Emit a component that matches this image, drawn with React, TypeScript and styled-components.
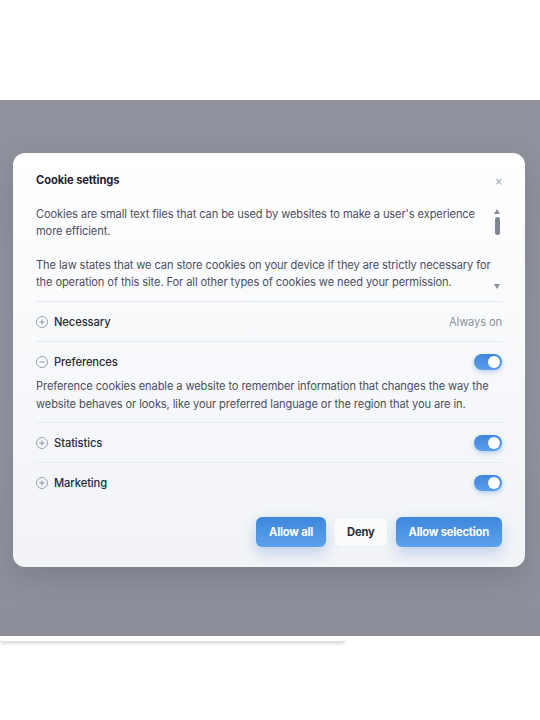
import React from "react";
import styled, { createGlobalStyle } from "styled-components";

const Global = createGlobalStyle`
  html, body { margin: 0; padding: 0; background: #ffffff; }
  body { font-family: Inter, "Noto Sans", sans-serif; -webkit-font-smoothing: antialiased; }
  * { box-sizing: border-box; }
`;

const Page = styled.div`
  width: 540px;
  height: 720px;
  padding-top: 100px;
  background: #ffffff;
`;

const Backdrop = styled.div`
  height: 536px;
  background: linear-gradient(180deg, #8f929c 0%, #9396a0 60%, #8c8f99 100%);
  padding: 53px 15px 0 13px;
`;

const Modal = styled.div`
  width: 512px;
  border-radius: 12px;
  background: linear-gradient(180deg, #ffffff 0%, #f9fafc 40%, #f1f3f6 100%);
  padding: 0 23px 20px;
  box-shadow: 0 10px 30px rgba(40, 44, 60, 0.18);
`;

const Header = styled.div`
  height: 53px;
  display: flex;
  align-items: center;
  justify-content: space-between;
`;

const Title = styled.h2`
  margin: 0;
  font-size: 11.2px;
  font-weight: 700;
  color: #1f2330;
  letter-spacing: -0.1px;
`;

const Close = styled.button`
  border: 0;
  background: transparent;
  padding: 0;
  margin-right: -1px;
  margin-top: 4px;
  font-size: 10px;
  line-height: 10px;
  color: #9aa1b0;
  font-family: "DejaVu Sans", sans-serif;
`;

const Intro = styled.div`
  display: flex;
  height: 96px;
  padding-bottom: 8px;
  border-bottom: 1px solid #e7eaef;
`;

const IntroText = styled.div`
  flex: 1;
  overflow: hidden;
  font-size: 11.1px;
  line-height: 17px;
  color: #4a4f5e;
  letter-spacing: -0.1px;
  p { margin: 0 0 17px; }
`;

const ScrollBar = styled.div`
  width: 10px;
  display: flex;
  flex-direction: column;
  align-items: center;
  padding-top: 3px;
`;

const Arrow = styled.div<{ $down?: boolean }>`
  width: 0;
  height: 0;
  border-left: 3.5px solid transparent;
  border-right: 3.5px solid transparent;
  ${(p) =>
    p.$down
      ? "border-top: 5px solid #8a909c; margin-top: auto; margin-bottom: 4px;"
      : "border-bottom: 5px solid #8a909c;"}
`;

const Thumb = styled.div`
  width: 5px;
  height: 18px;
  border-radius: 3px;
  background: #7f8591;
  margin-top: 3px;
`;

const Row = styled.div<{ $last?: boolean }>`
  border-bottom: ${(p) => (p.$last ? "0" : "1px solid #e7eaef")};
`;

const RowHead = styled.div<{ $open?: boolean }>`
  height: ${(p) => (p.$open ? "35px" : "39px")};
  padding-top: ${(p) => (p.$open ? "5px" : "0")};
  display: flex;
  align-items: center;
  gap: 6px;
`;

const PlusIcon = styled.span`
  width: 12px;
  height: 12px;
  border-radius: 50%;
  border: 1px solid #9aa2b3;
  display: inline-flex;
  align-items: center;
  justify-content: center;
  svg { display: block; }
`;

const Label = styled.span`
  font-size: 11.2px;
  font-weight: 500;
  color: #272b37;
  flex: 1;
  letter-spacing: -0.1px;
`;

const Always = styled.span`
  font-size: 11.1px;
  color: #8b91a0;
  letter-spacing: -0.1px;
`;

const Toggle = styled.span`
  width: 28px;
  height: 16px;
  border-radius: 8px;
  background: linear-gradient(180deg, #3f86dc 0%, #5a9eea 100%);
  box-shadow: 0 2px 5px rgba(64, 130, 220, 0.35);
  display: inline-flex;
  align-items: center;
  justify-content: flex-end;
  padding: 0 2px;
  &::after {
    content: "";
    width: 12px;
    height: 12px;
    border-radius: 50%;
    background: #ffffff;
  }
`;

const Desc = styled.p`
  margin: 0;
  padding-bottom: 9px;
  font-size: 11.1px;
  line-height: 18px;
  color: #4a4f5e;
  letter-spacing: -0.1px;
`;

const Actions = styled.div`
  display: flex;
  justify-content: flex-end;
  gap: 8px;
  margin-top: 15px;
`;

const Btn = styled.button<{ $primary?: boolean }>`
  height: 30px;
  padding: 0 ${(p) => (p.$primary ? "13px" : "12px")};
  border-radius: 6px;
  font-family: Inter, sans-serif;
  font-size: 11.2px;
  font-weight: 700;
  letter-spacing: -0.2px;
  cursor: pointer;
  ${(p) =>
    p.$primary
      ? `border: 0;
         color: #ffffff;
         background: linear-gradient(180deg, #3f87dc 0%, #5ba1ec 100%);
         box-shadow: 0 6px 14px rgba(70, 130, 210, 0.3);`
      : `border: 1px solid #eceff3;
         color: #2a2e3a;
         background: #fafbfc;`}
`;

const FooterStrip = styled.div`
  width: 345px;
  height: 4px;
  margin-top: 1px;
  background: #ffffff;
  box-shadow: 0 3px 3px rgba(0, 0, 0, 0.15);
  border-radius: 0 0 4px 4px;
`;

const Plus = ({ minus }: { minus?: boolean }) => (
  <PlusIcon>
    <svg width="6" height="6" viewBox="0 0 6 6">
      <path d="M0.5 3H5.5" stroke="#8a93a6" strokeWidth="1" />
      {!minus && <path d="M3 0.5V5.5" stroke="#8a93a6" strokeWidth="1" />}
    </svg>
  </PlusIcon>
);

export default function App() {
  return (
    <>
      <Global />
      <Page>
        <Backdrop>
          <Modal>
            <Header>
              <Title>Cookie settings</Title>
              <Close aria-label="Close">×</Close>
            </Header>
            <Intro>
              <IntroText>
                <p>
                  Cookies are small text files that can be used by websites to make a user's experience
                  more efficient.
                </p>
                <p>
                  The law states that we can store cookies on your device if they are strictly necessary for
                  the operation of this site. For all other types of cookies we need your permission.
                </p>
              </IntroText>
              <ScrollBar>
                <Arrow />
                <Thumb />
                <Arrow $down />
              </ScrollBar>
            </Intro>
            <Row>
              <RowHead>
                <Plus />
                <Label>Necessary</Label>
                <Always>Always on</Always>
              </RowHead>
            </Row>
            <Row>
              <RowHead $open>
                <Plus minus />
                <Label>Preferences</Label>
                <Toggle />
              </RowHead>
              <Desc>
                Preference cookies enable a website to remember information that changes the way the
                website behaves or looks, like your preferred language or the region that you are in.
              </Desc>
            </Row>
            <Row>
              <RowHead>
                <Plus />
                <Label>Statistics</Label>
                <Toggle />
              </RowHead>
            </Row>
            <Row $last>
              <RowHead>
                <Plus />
                <Label>Marketing</Label>
                <Toggle />
              </RowHead>
            </Row>
            <Actions>
              <Btn $primary>Allow all</Btn>
              <Btn>Deny</Btn>
              <Btn $primary>Allow selection</Btn>
            </Actions>
          </Modal>
        </Backdrop>
        <FooterStrip />
      </Page>
    </>
  );
}
